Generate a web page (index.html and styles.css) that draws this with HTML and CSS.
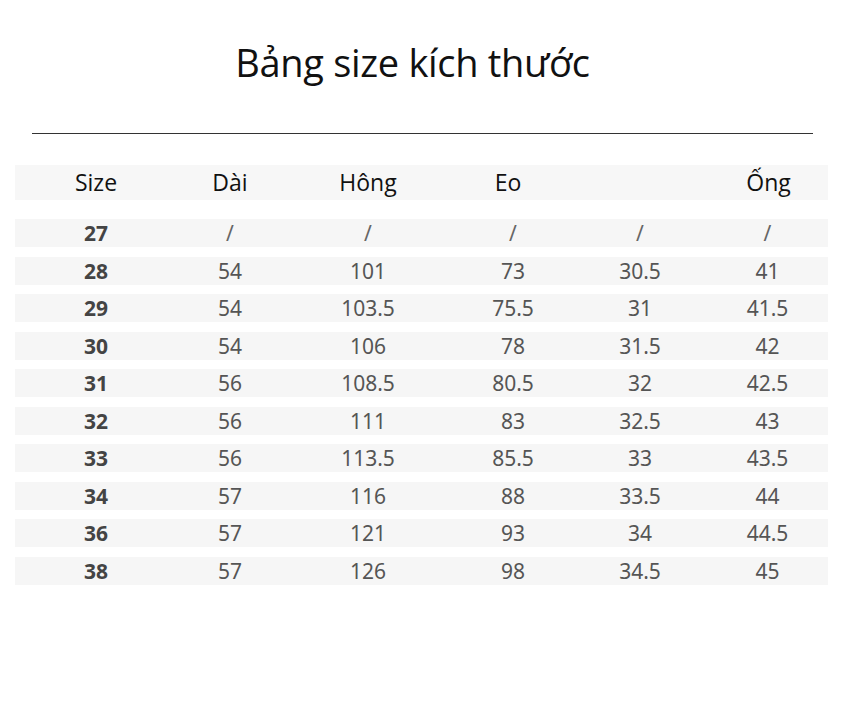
FILE: index.html
```html
<!DOCTYPE html>
<html lang="vi">
<head>
<meta charset="utf-8">
<title>Bảng size kích thước</title>
<link rel="stylesheet" href="styles.css">
</head>
<body>
<div class="page">
  <h1 class="title">Bảng size kích thước</h1>
  <div class="rule"></div>
  <div class="table">
    <div class="row head">
      <div class="cell">Size</div>
      <div class="cell">Dài</div>
      <div class="cell">Hông</div>
      <div class="cell eo">Eo</div>
      <div class="cell"></div>
      <div class="cell ong">Ống</div>
    </div>
    <div class="row first">
      <div class="cell size">27</div><div class="cell slash">/</div><div class="cell slash">/</div><div class="cell slash">/</div><div class="cell slash">/</div><div class="cell slash">/</div>
    </div>
    <div class="row">
      <div class="cell size">28</div><div class="cell">54</div><div class="cell">101</div><div class="cell">73</div><div class="cell">30.5</div><div class="cell">41</div>
    </div>
    <div class="row">
      <div class="cell size">29</div><div class="cell">54</div><div class="cell">103.5</div><div class="cell">75.5</div><div class="cell">31</div><div class="cell">41.5</div>
    </div>
    <div class="row">
      <div class="cell size">30</div><div class="cell">54</div><div class="cell">106</div><div class="cell">78</div><div class="cell">31.5</div><div class="cell">42</div>
    </div>
    <div class="row">
      <div class="cell size">31</div><div class="cell">56</div><div class="cell">108.5</div><div class="cell">80.5</div><div class="cell">32</div><div class="cell">42.5</div>
    </div>
    <div class="row">
      <div class="cell size">32</div><div class="cell">56</div><div class="cell">111</div><div class="cell">83</div><div class="cell">32.5</div><div class="cell">43</div>
    </div>
    <div class="row">
      <div class="cell size">33</div><div class="cell">56</div><div class="cell">113.5</div><div class="cell">85.5</div><div class="cell">33</div><div class="cell">43.5</div>
    </div>
    <div class="row">
      <div class="cell size">34</div><div class="cell">57</div><div class="cell">116</div><div class="cell">88</div><div class="cell">33.5</div><div class="cell">44</div>
    </div>
    <div class="row">
      <div class="cell size">36</div><div class="cell">57</div><div class="cell">121</div><div class="cell">93</div><div class="cell">34</div><div class="cell">44.5</div>
    </div>
    <div class="row">
      <div class="cell size">38</div><div class="cell">57</div><div class="cell">126</div><div class="cell">98</div><div class="cell">34.5</div><div class="cell">45</div>
    </div>
  </div>
</div>
</body>
</html>
```
FILE: styles.css
```css
html, body {
  margin: 0;
  padding: 0;
  background: #ffffff;
}

.page {
  width: 845px;
  min-height: 710px;
  padding-top: 43px;
  box-sizing: border-box;
}

.title {
  margin: 0;
  padding-right: 20px;
  text-align: center;
  font-family: "Open Sans", "Noto Sans", sans-serif;
  font-weight: 400;
  font-size: 38px;
  line-height: 38px;
  color: #111111;
  letter-spacing: -0.3px;
}

.rule {
  margin: 52px 0 0 32px;
  width: 781px;
  height: 1px;
  background: #333333;
}

.table {
  margin: 31px 0 0 15px;
  width: 813px;
  display: flex;
  flex-direction: column;
  gap: 9.55px;
}

.row {
  display: grid;
  grid-template-columns: 162px 106px 170px 120px 134px 121px;
  height: 28px;
  background: #f6f6f6;
  font-family: "Noto Sans", "Open Sans", sans-serif;
  font-size: 21px;
  line-height: 29px;
  color: #555555;
}

.row.head {
  height: 35px;
  background: #f7f7f7;
  font-family: "Open Sans", "Noto Sans", sans-serif;
  font-size: 23px;
  line-height: 35px;
  color: #111111;
}

.row.first {
  margin-top: 9.5px;
}

.cell {
  text-align: center;
  white-space: nowrap;
}

.cell.size {
  font-weight: 700;
  color: #444444;
}

.cell.slash {
  color: #666666;
}

.cell.eo {
  padding-right: 10px;
}

.cell.ong {
  padding-left: 2px;
}
```
